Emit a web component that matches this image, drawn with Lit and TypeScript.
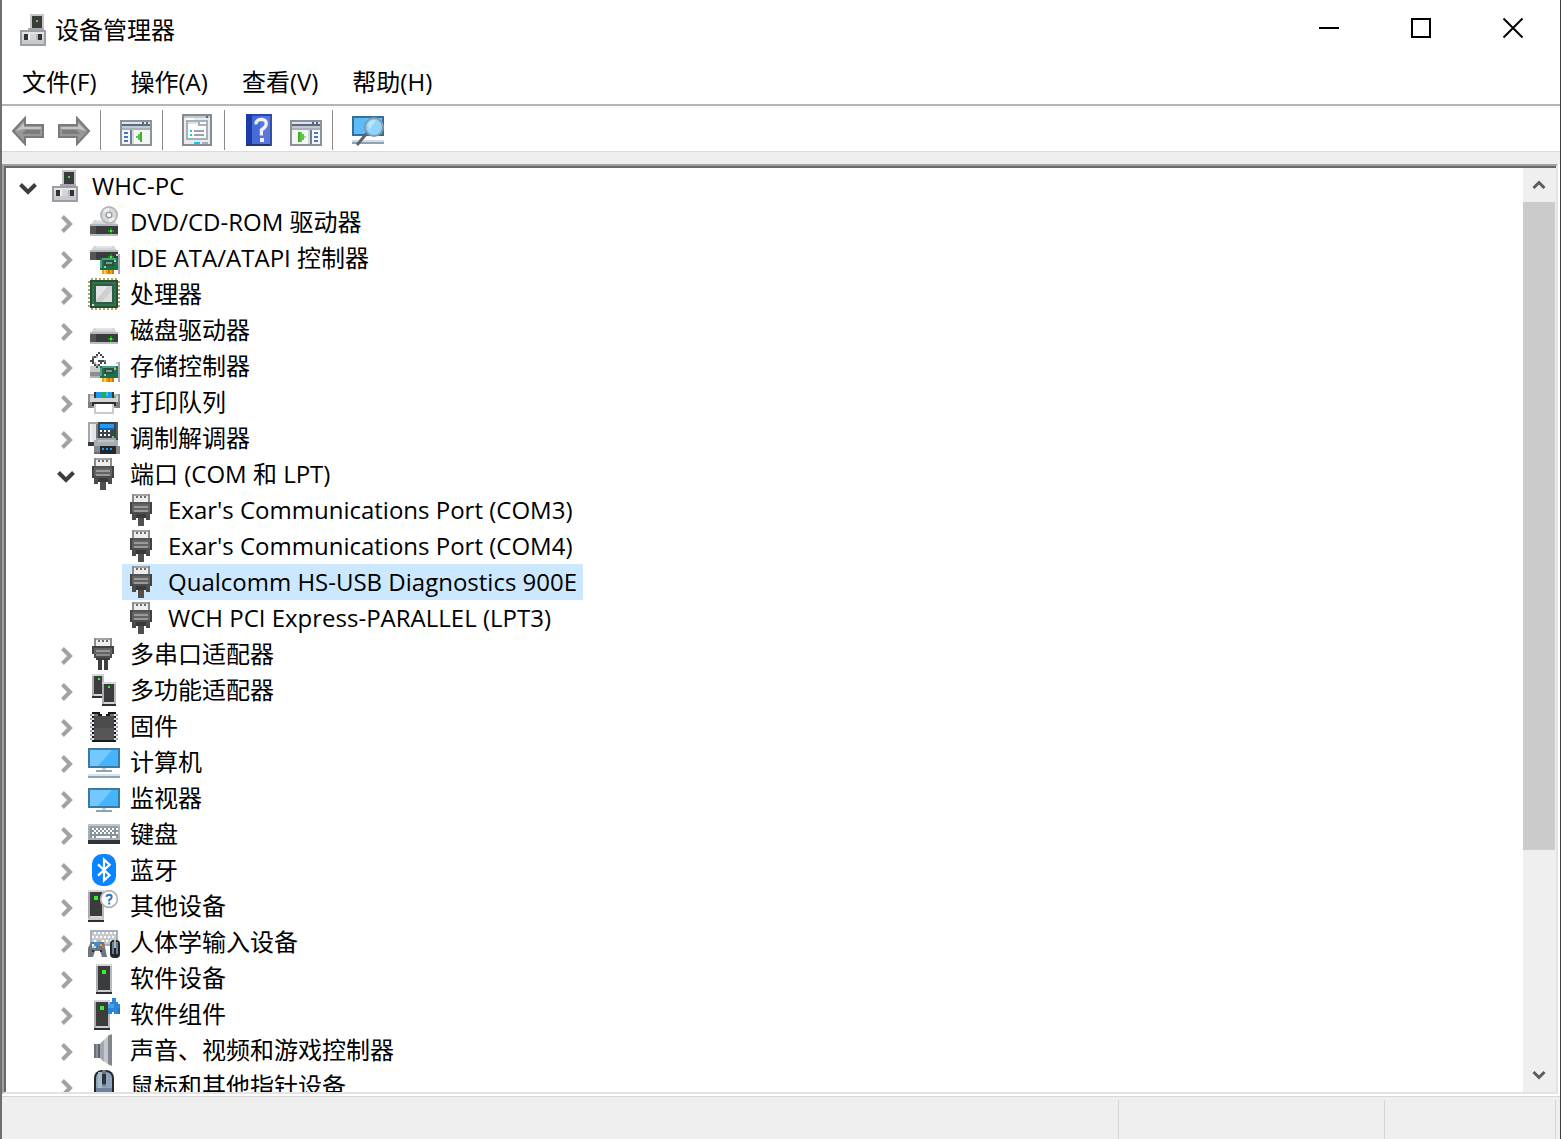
import { LitElement, html, svg, css, nothing } from "lit";
import type { SVGTemplateResult } from "lit";
import { customElement, property, state } from "lit/decorators.js";
import { classMap } from "lit/directives/class-map.js";

/** Draws "x y w h colour" cells, separated by semicolons, on the 16-unit icon grid. */
const cells = (spec: string): SVGTemplateResult[] =>
  spec
    .split(";")
    .map((part) => part.trim().split(" "))
    .filter((part) => part.length === 5)
    .map(([x, y, w, h, fill]) => svg`<rect x=${x} y=${y} width=${w} height=${h} fill=${fill}></rect>`);

const drive = (y: number) => svg`
  <path d="M3 ${y}h10l2 3H1z" fill="#d3d5d8"/>
  <path d="M4 ${y}h8v1H4z" fill="#e3e4e6"/>
  ${cells(`1 ${y + 2} 14 1 #b4b7bb;1 ${y + 3} 14 4 #3c3c3c;1 ${y + 3} 3 4 #555555;10 ${y + 5} 3 1 #178a17;11 ${y + 4} 1 3 #178a17;11 ${y + 5} 1 1 #3df53d;1 ${y + 7} 14 1 #b9bcc0`)}`;

const card = cells(
  "6 8 9 6 #1d6e49;7 8 7 1 #49a37b;6 9 1 4 #49a37b;8 9 5 3 #2f4f43;9 10 3 1 #6fa48c;8 12 1 1 #8ed0af;13 9 1 1 #8ed0af;" +
    "7 14 6 2 #f0a30a;8 14 1 2 #ffc94d;10 14 1 2 #c97e00;12 14 1 2 #c97e00;15 6 1 10 #a5a8ab;14 6 1 1 #c9ccd0",
);

const tower = (x: number, y: number, w: number, h: number) =>
  cells(
    `${x} ${y} ${w} ${h - 1} #d4d7da;${x} ${y + 1} 1 ${h - 2} #a9adb2;${x + 1} ${y + 1} ${w - 2} ${h - 3} #3c3c3c;` +
      `${x + w - 1} ${y + 1} 1 ${h - 2} #b7bbbf;${x} ${y + h - 1} ${w} 1 #2b2e33`,
  );

const plugHead = cells(
  "3 0 9 4 #8c8c8c;4 1 7 3 #ededed;5 1 1 1 #6d6d6d;7 1 1 1 #6d6d6d;9 1 1 1 #6d6d6d;4 0 7 1 #a2a2a2",
);

const miniWindow = (flip: boolean) =>
  cells(
    "0 3 16 13 #8b9299;1 4 14 1 #dfe5ea;1 5 14 1 #5a6a86;1 6 14 1 #c3c9cf;11 4 1 1 #52688c;13 4 1 1 #52688c;1 7 14 8 #f4f5f5;1 7 14 1 #a9b0b6;" +
      (flip
        ? "10 8 1 7 #6e7f94;9 8 1 7 #d5d9dc;12 9 2 1 #4a78b8;12 11 2 1 #4a78b8;12 13 2 1 #4a78b8;4 9 1 5 #3fae29;5 9 1 5 #5cc544;6 10 1 3 #5cc544;7 11 1 1 #9bdc8c"
        : "5 8 1 7 #6e7f94;6 8 1 7 #d5d9dc;2 9 2 1 #4a78b8;2 11 2 1 #4a78b8;2 13 2 1 #4a78b8;10 9 1 5 #3fae29;9 10 1 3 #5cc544;8 11 1 1 #5cc544"),
  );

const arrowBody = svg`
  <path d="M0.5 8.5L6.5 2V5.5H15.5V11.5H6.5V15z" fill="#989898" stroke="#7a7a7a" stroke-width="1"/>
  <path d="M2 8.5L6 4.5V6.5H14.5V7.5H6z" fill="#c4c4c4"/>
  <path d="M7 8h7v2H5z" fill="#7b7b7b"/>`;

const screen = (y: number) => svg`
  ${cells(`0 ${y} 16 10 #3b79a3;1 ${y + 1} 14 8 #45b4fb`)}
  <path d="M1 ${y + 1}h11L5 ${y + 9}H1z" fill="#72c8ff"/>
  ${cells(`7 ${y + 10} 2 1 #c9d3de;4 ${y + 11} 8 1 #8fa1b5`)}`;

const keyRow = (x: number, y: number, n: number) =>
  Array.from({ length: n }, (_, i) => svg`<rect x=${x + i * 2} y=${y} width="1" height="1" fill="#ffffff"></rect>`);

const icons: Record<string, unknown> = {
  manager: svg`${cells(
    "6 0 7 8 #c4c7ca;7 1 5 6 #3b3b3b;9 3 1 1 #39e639;5 7 8 1 #a5a8ab;1 8 13 8 #9b9ea2;2 9 11 6 #d4d5d9;2 9 11 1 #e4e5e8;2 13 11 2 #c8c9ce;3 10 2 3 #333333;10 10 2 3 #333333;5 10 1 3 #f2f2f4;9 10 1 3 #b5b7bc",
  )}`,
  dvd: svg`${drive(7)}
    <circle cx="10.5" cy="4.5" r="4.5" fill="#b3b6b8"/><circle cx="10.5" cy="4.5" r="3.6" fill="#d7dadb"/>
    <path d="M10.5 4.5L7.5 2.5A4 4 0 0 1 10.5 .9z" fill="#eef0f0"/><path d="M10.5 4.5l3.2 1.6a4 4 0 0 1-3.2 2z" fill="#eef0f0"/>
    <circle cx="10.5" cy="4.5" r="1.8" fill="#9da1a3"/><circle cx="10.5" cy="4.5" r="1" fill="#ffffff"/>`,
  ide: svg`${drive(2)}${cells("1 9 5 1 #ffffff")}${card}`,
  cpu: svg`${[1, 3, 5, 7, 9, 11, 13].map((p) => cells(`${p + 0.5} 0 1 1 #c1a15a;${p + 0.5} 15 1 1 #c1a15a;0 ${p + 0.5} 1 1 #c1a15a;15 ${p + 0.5} 1 1 #c1a15a`))}
    ${cells("1 1 14 14 #1f5138;2 2 12 12 #35704f;2 13 1 1 #d8e8d8;3 3 10 10 #2b5f43;4 4 8 8 #cfcfcf")}
    <path d="M4 4h6L4 11z" fill="#e4e4e4"/><path d="M12 6v6H7z" fill="#dedede"/>`,
  disk: drive(7),
  storage: svg`${cells("1 8 5 3 #c9cccf;1 11 5 2 #8b8f93;1 13 5 1 #b0b3b6")}
    ${cells(
      "5 1 1 1 #484848;4 2 1 1 #484848;6 2 1 1 #484848;3 3 1 1 #484848;7 3 1 1 #484848;2 4 1 1 #484848;1 5 2 1 #484848;2 6 1 1 #484848;3 7 1 1 #484848;4 8 1 1 #484848;5 7 1 1 #484848;6 6 1 1 #484848;7 5 1 1 #484848;8 6 1 1 #484848;5 5 2 1 #484848;2 3 1 1 #8a8a8a;4 3 1 1 #b5b5b5;3 6 1 1 #b5b5b5;4 7 1 1 #b5b5b5;8 5 1 1 #8a8a8a",
    )}
    ${card}`,
  printer: cells(
    "0 4 16 7 #8d9196;1 4 14 1 #b5b9bd;1 5 14 3 #d3d6d9;3 3 10 3 #33383c;4 3 8 3 #2196f3;7 3 2 3 #20b24a;9 3 1 2 #39c7c0;13 5 1 1 #2be02b;2 8 12 2 #2f2f2f;0 8 2 3 #7a7e83;14 8 2 3 #7a7e83;3 9 10 4 #ffffff;3 9 1 4 #c8cbce;12 9 1 4 #c8cbce;3 13 10 1 #c8cbce",
  ),
  modem: svg`${cells("0 0 15 9 #3d4349;0 0 5 11 #a4a8ac;1 1 3 9 #e3e5e7;1 1 1 9 #f2f3f4;4 1 1 9 #767b80;0 10 4 2 #343a3f;6 1 7 2 #1e9bff;6 3 7 1 #1366aa;14 0 1 8 #565c62")}
    ${keyRow(6, 4, 3)}${keyRow(6, 6, 3)}
    ${cells("12 7 1 1 #33ee33;4 8 10 1 #a0a3a7;3 9 12 3 #a9acb0;3 12 13 4 #85888c;5 9 8 1 #c1c4c7;6 12 8 4 #22272b;7 13 1 1 #1e9bff;9 13 1 1 #1e9bff;11 13 1 1 #1e9bff;3 15 3 1 #6a6d70")}`,
  port: svg`${plugHead}${cells("2 4 11 6 #424242;3 5 9 5 #636363;3 4 9 1 #555555;4 6 7 1 #9a9a9a;4 8 7 1 #9a9a9a;3 9 9 2 #4d4d4d;3 11 2 2 #4a4a4a;10 11 2 2 #4a4a4a;5 10 5 2 #3a3a3a;6 12 3 4 #505050")}`,
  multiport: svg`${plugHead}${cells("2 4 11 4 #424242;3 5 9 3 #636363;4 6 7 1 #9a9a9a;3 8 9 2 #4d4d4d;4 8 7 1 #8c8c8c;4 10 7 1 #3a3a3a;5 11 2 5 #3f3f3f;8 11 2 5 #3f3f3f")}`,
  multifunction: svg`${tower(2, 0, 6, 12)}${cells("5 2 1 1 #3df53d")}${tower(7, 4, 7, 12)}${cells("10 6 1 1 #3df53d")}`,
  firmware: svg`${[2, 4, 6, 8, 10, 12, 14].map((p) => cells(`1 ${p} 2 1 #9aa7bb;13 ${p} 2 1 #9aa7bb`))}
    ${cells("2 1 12 15 #181818;3 3 10 12 #4b4b4b;3 9 10 6 #565656;6 1 4 1 #ffffff;7 2 2 1 #ffffff;6 2 1 1 #181818;9 2 1 1 #181818;3 2 2 1 #7a7a7a;11 2 2 1 #7a7a7a")}
    ${[2, 4, 6, 8, 10, 12, 14].map((p) => cells(`2 ${p} 1 1 #dfe3e8;13 ${p} 1 1 #dfe3e8`))}`,
  computer: svg`${screen(1)}${cells("0 14 16 1 #dbe1e8;0 15 16 1 #8fa1b5")}`,
  monitor: screen(3),
  keyboard: svg`${cells("0 3 16 8 #a8afb6;1 4 14 6 #8a9299;1 4 14 1 #99a1a8;0 11 16 2 #2e343a;0 3 16 1 #c2c7cb;4 9 7 1 #ffffff")}
    ${keyRow(2, 5, 7)}${keyRow(3, 6, 5)}${keyRow(2, 7, 7)}${cells("2 9 1 1 #ffffff;12 9 2 1 #ffffff")}`,
  bluetooth: svg`<rect x="2" y="0" width="12" height="16" rx="5" fill="#0a84ff"/>
    <path d="M5 5.2L10.8 10.6L8 13.2V2.8L10.8 5.4L5 10.8" fill="none" stroke="#ffffff" stroke-width="1.1"/>`,
  other: svg`${tower(0, 0, 8, 15)}${cells("3 3 2 2 #2bf52b;0 14 8 1 #c9ccd0;0 15 8 1 #2b2e33")}
    <circle cx="10.5" cy="4.5" r="4.2" fill="#ffffff" stroke="#b0b0b0" stroke-width=".8"/>
    <path d="M9.2 3.4Q9.4 2.4 10.6 2.4Q12 2.5 11.8 3.7Q11.6 4.5 10.6 5V5.8M10.1 6.8h1" fill="none" stroke="#2d78b8" stroke-width="1"/>`,
  hid: svg`${cells("1 2 14 8 #a9b0b7;2 3 12 6 #c5cad0")}${keyRow(3, 3, 6)}${keyRow(2, 5, 6)}${keyRow(3, 7, 6)}
    <path d="M1.5 8h6.5l1.5 7.5H7L6 12.5H3.5L2.5 15.5H0V11z" fill="#6b7681"/>
    ${cells("3 8 3 2 #2196f3;2 9 1 1 #ffffff;6 9 1 1 #ff9d2e;7 10 1 1 #ff5a36;5 7 1 1 #ff9d2e;2 10 2 1 #cbd2d8;6 12 1 1 #27303a;2 12 1 1 #27303a")}
    <rect x="11" y="7" width="5" height="9" rx="2" fill="#20262c"/>${cells("12 8 1 6 #6f7c89;14 8 1 6 #6f7c89;13 7 1 4 #aeb7c0")}`,
  software: svg`${tower(4, 1, 8, 15)}${cells("7 4 2 2 #2bf52b;5 14 6 1 #c9ccd0")}`,
  component: svg`${tower(3, 1, 8, 15)}${cells("6 4 2 2 #2bf52b;4 14 6 1 #c9ccd0;10 2 6 6 #2b86d3;12 0 2 3 #2b86d3;12 7 1 1 #ffffff;15 5 1 3 #1f75bd;10 3 3 2 #4aa0e6;10 2 1 1 #b7bbbf;15 2 1 1 #ffffff")}`,
  sound: svg`${cells("3 5 3 7 #8a929a;3 5 1 7 #68727c;5 5 1 7 #59636d")}
    <path d="M6 5L11 0V16L6 12z" fill="#c3c7cb"/><path d="M6 5l2-2v11l-2-2z" fill="#a1a7ad"/><path d="M10 1l2-1v16l-2-1z" fill="#7f868d"/>`,
  mouse: svg`<rect x="3" y="0" width="10" height="20" rx="4" fill="#23282d"/><rect x="4" y="1" width="8" height="18" rx="3" fill="#8fa3bb"/>
    ${cells("5 1 2 8 #a9bacd;7 0 2 8 #6a7889;7 2 2 5 #2c3238;4 9 8 8 #71839a")}`,
  back: arrowBody,
  forward: svg`<g transform="matrix(-1 0 0 1 16 0)">${arrowBody}</g>`,
  tree: miniWindow(false),
  action: miniWindow(true),
  properties: cells(
    "0 0 15 16 #868c92;1 1 13 14 #e9ecee;1 1 13 1 #c3c9ce;12 1 1 1 #4d678c;2 3 11 10 #a8b0b7;3 4 9 8 #ffffff;3 4 5 1 #dfe3e6;8 4 1 1 #a8b0b7;8 5 4 1 #a8b0b7;4 8 1 1 #12c6f7;6 8 5 1 #9aa3ab;4 10 1 1 #12c6f7;6 10 5 1 #9aa3ab;6 14 3 1 #12c6f7;10 14 3 1 #a8b0b7;2 2 4 1 #ffffff",
  ),
  help: svg`${cells("1 0 13 16 #2648b5;1 0 3 16 #1c3ba6;4 1 9 14 #5876dd;4 1 4 14 #456bd9;1 15 13 1 #26346f;13 1 1 15 #34509f")}
    <path d="M6 5.2Q5.9 2.9 8.6 2.7Q11.4 2.8 11.1 5.2Q10.8 6.9 8.7 8V10.8" fill="none" stroke="#f2f2f2" stroke-width="1.6"/>
    ${cells("8 12 2 2 #f2f2f2")}`,
  scan: svg`${cells("0 1 16 10 #336f9b;1 2 14 8 #6cc5fb;1 2 6 8 #5dbcf8;4 13 12 1 #d3dae1;0 14 16 1 #8fa1b5;0 13 3 1 #d3dae1")}
    <path d="M7.5 9.5L2.5 15.5" stroke="#5d6469" stroke-width="1.5"/>
    <circle cx="11" cy="6.5" r="4.5" fill="#8fd4fb" stroke="#8299a9" stroke-width="1"/>
    <path d="M8 5a3.5 3.5 0 0 1 4-1.8L8.6 8z" fill="#b9e4fc"/>`,
};

@customElement("device-icon")
export class DeviceIcon extends LitElement {
  @property() name = "";

  static styles = css`
    :host {
      display: block;
      width: 32px;
      height: 32px;
      flex: none;
    }
    .glyph {
      display: block;
      width: 100%;
      height: 100%;
    }
  `;

  render() {
    return html`<svg class="glyph" viewBox="0 0 16 16" aria-hidden="true">${icons[this.name] ?? nothing}</svg>`;
  }
}

interface Device {
  name: string;
  icon: string;
  children?: Device[];
}

const computer: Device = {
  name: "WHC-PC",
  icon: "manager",
  children: [
    { name: "DVD/CD-ROM 驱动器", icon: "dvd", children: [] },
    { name: "IDE ATA/ATAPI 控制器", icon: "ide", children: [] },
    { name: "处理器", icon: "cpu", children: [] },
    { name: "磁盘驱动器", icon: "disk", children: [] },
    { name: "存储控制器", icon: "storage", children: [] },
    { name: "打印队列", icon: "printer", children: [] },
    { name: "调制解调器", icon: "modem", children: [] },
    {
      name: "端口 (COM 和 LPT)",
      icon: "port",
      children: [
        { name: "Exar's Communications Port (COM3)", icon: "port" },
        { name: "Exar's Communications Port (COM4)", icon: "port" },
        { name: "Qualcomm HS-USB Diagnostics 900E", icon: "port" },
        { name: "WCH PCI Express-PARALLEL (LPT3)", icon: "port" },
      ],
    },
    { name: "多串口适配器", icon: "multiport", children: [] },
    { name: "多功能适配器", icon: "multifunction", children: [] },
    { name: "固件", icon: "firmware", children: [] },
    { name: "计算机", icon: "computer", children: [] },
    { name: "监视器", icon: "monitor", children: [] },
    { name: "键盘", icon: "keyboard", children: [] },
    { name: "蓝牙", icon: "bluetooth", children: [] },
    { name: "其他设备", icon: "other", children: [] },
    { name: "人体学输入设备", icon: "hid", children: [] },
    { name: "软件设备", icon: "software", children: [] },
    { name: "软件组件", icon: "component", children: [] },
    { name: "声音、视频和游戏控制器", icon: "sound", children: [] },
    { name: "鼠标和其他指针设备", icon: "mouse", children: [] },
  ],
};

const menus = ["文件(F)", "操作(A)", "查看(V)", "帮助(H)"];

const tools = [
  [
    { icon: "back", label: "后退" },
    { icon: "forward", label: "前进" },
  ],
  [{ icon: "tree", label: "显示/隐藏控制台树" }],
  [{ icon: "properties", label: "属性" }],
  [
    { icon: "help", label: "帮助" },
    { icon: "action", label: "显示/隐藏操作窗格" },
  ],
  [{ icon: "scan", label: "扫描检测硬件改动" }],
];

@customElement("app-root")
export class AppRoot extends LitElement {
  @state() private open = new Set<string>(["WHC-PC", "端口 (COM 和 LPT)"]);
  @state() private selected = "Qualcomm HS-USB Diagnostics 900E";

  static styles = css`
    :host {
      display: block;
      font: 24px/36px "Open Sans", "Noto Sans CJK SC", sans-serif;
      color: #000;
    }
    * {
      box-sizing: border-box;
    }
    button {
      margin: 0;
      padding: 0;
      border: 0;
      background: none;
      font: inherit;
      color: inherit;
    }
    .window {
      display: flex;
      flex-direction: column;
      height: 100vh;
      background: #fff;
      border-left: 2px solid #6f6f70;
      border-right: 1px solid #3a3e42;
      overflow: hidden;
    }
    .titlebar {
      display: flex;
      align-items: flex-start;
      height: 60px;
      flex: none;
      padding-right: 1px;
    }
    .caption {
      display: flex;
      align-items: center;
      gap: 5px;
      flex: 1;
      height: 60px;
      padding-left: 16px;
    }
    .title {
      margin: 0;
      font: inherit;
    }
    .control {
      display: grid;
      place-items: center;
      width: 92px;
      height: 56px;
    }
    .control-glyph {
      width: 22px;
      height: 22px;
      fill: none;
      stroke: #000;
      stroke-width: 2;
    }
    .menubar {
      display: flex;
      align-items: center;
      gap: 34px;
      height: 46px;
      flex: none;
      padding-left: 20px;
      border-bottom: 2px solid #b4b4b4;
    }
    .toolbar {
      display: flex;
      align-items: center;
      height: 46px;
      flex: none;
      padding-left: 10px;
      border-top: 2px solid #f8fafd;
      border-bottom: 1px solid #dadada;
    }
    .group {
      display: flex;
      gap: 14px;
    }
    .divider {
      width: 1px;
      height: 40px;
      margin: 0 19px 0 10px;
      background: #8a8a8a;
    }
    .band {
      height: 12px;
      flex: none;
      background: #efefef;
    }
    .sunken {
      display: flex;
      flex: 1;
      min-height: 0;
      margin: 0 2px 2px 0;
      border: 2px solid;
      border-color: #a0a0a0 #e3e3e3 #e3e3e3 #a0a0a0;
    }
    .pane {
      display: flex;
      flex: 1;
      min-width: 0;
      border-top: 2px solid #696969;
      border-left: 2px solid #696969;
    }
    .tree {
      flex: 1;
      min-width: 0;
      margin: 0;
      padding: 0 0 0 6px;
      list-style: none;
      overflow: hidden;
    }
    .branch {
      margin: 0;
      padding: 0 0 0 38px;
      list-style: none;
    }
    .row {
      display: flex;
      align-items: center;
      height: 36px;
      white-space: nowrap;
    }
    .twisty {
      display: grid;
      place-items: center;
      width: 32px;
      height: 36px;
      margin-right: 2px;
    }
    .twisty-glyph {
      width: 20px;
      height: 20px;
      fill: none;
      stroke: #a2a2a2;
      stroke-width: 4;
      overflow: visible;
    }
    .expanded {
      stroke: #3d3d3d;
    }
    .entry {
      display: flex;
      align-items: center;
      gap: 10px;
      height: 36px;
      padding: 0 6px 0 4px;
    }
    .leaf {
      margin-left: 34px;
    }
    .chosen {
      background: #cce8ff;
    }
    .scrollbar {
      display: flex;
      flex-direction: column;
      width: 33px;
      padding-right: 1px;
      background: #efefef;
    }
    .step {
      display: grid;
      place-items: center;
      height: 34px;
      flex: none;
    }
    .step-glyph {
      width: 14px;
      height: 14px;
      fill: none;
      stroke: #5c5c5c;
      stroke-width: 3;
    }
    .track {
      display: flex;
      flex-direction: column;
      flex: 1;
    }
    .thumb {
      flex: 81;
      background: #cbcbcb;
    }
    .rest {
      flex: 26;
    }
    .statusbar {
      display: flex;
      height: 43px;
      flex: none;
      padding: 3px 4px 0 0;
      border-top: 1px solid #d7d7d7;
      background: #efefef;
    }
    .cell {
      border-right: 1px solid #d7d7d7;
    }
    .cell-main {
      flex: 1118;
    }
    .cell-wide {
      flex: 266;
    }
    .cell-narrow {
      flex: 170;
    }
  `;

  private toggle(name: string) {
    const next = new Set(this.open);
    if (!next.delete(name)) next.add(name);
    this.open = next;
  }

  private scrollTree(rows: number) {
    this.renderRoot.querySelector(".tree")?.scrollBy(0, rows * 36);
  }

  private renderDevice(device: Device): unknown {
    const expanded = this.open.has(device.name);
    const chosen = this.selected === device.name;
    return html`
      <li role="treeitem" aria-selected=${chosen} aria-expanded=${device.children ? String(expanded) : nothing}>
        <div class="row">
          ${device.children
            ? html`<button class="twisty" aria-label=${device.name} @click=${() => this.toggle(device.name)}>
                <svg class=${classMap({ "twisty-glyph": true, expanded })} viewBox="0 0 20 20">
                  ${expanded ? svg`<path d="M2.5 8.5L10 16L17.5 8.5"/>` : svg`<path d="M6.5 4.5L14 12L6.5 19.5"/>`}
                </svg>
              </button>`
            : nothing}
          <button
            class=${classMap({ entry: true, leaf: !device.children, chosen })}
            @click=${() => (this.selected = device.name)}
          >
            <device-icon name=${device.icon}></device-icon>
            <span>${device.name}</span>
          </button>
        </div>
        ${expanded && device.children?.length
          ? html`<ul class="branch" role="group">
              ${device.children.map((child) => this.renderDevice(child))}
            </ul>`
          : nothing}
      </li>
    `;
  }

  render() {
    return html`
      <div class="window">
        <header class="titlebar">
          <div class="caption">
            <device-icon name="manager"></device-icon>
            <h1 class="title">设备管理器</h1>
          </div>
          <button class="control" aria-label="最小化">
            <svg class="control-glyph" viewBox="0 0 22 22"><path d="M1 11H21"/></svg>
          </button>
          <button class="control" aria-label="最大化">
            <svg class="control-glyph" viewBox="0 0 22 22"><path d="M2 2H20V20H2z"/></svg>
          </button>
          <button class="control" aria-label="关闭">
            <svg class="control-glyph" viewBox="0 0 22 22"><path d="M1.5 1.5L20.5 20.5M20.5 1.5L1.5 20.5"/></svg>
          </button>
        </header>
        <nav class="menubar">${menus.map((label) => html`<button>${label}</button>`)}</nav>
        <div class="toolbar" role="toolbar">
          ${tools.map(
            (group, i) => html`
              ${i ? html`<span class="divider"></span>` : nothing}
              <div class="group">
                ${group.map(
                  (tool) => html`<button aria-label=${tool.label}><device-icon name=${tool.icon}></device-icon></button>`,
                )}
              </div>
            `,
          )}
        </div>
        <div class="band"></div>
        <main class="sunken">
          <div class="pane">
            <ul class="tree" role="tree">
              ${this.renderDevice(computer)}
            </ul>
            <div class="scrollbar">
              <button class="step" aria-label="向上滚动" @click=${() => this.scrollTree(-1)}>
                <svg class="step-glyph" viewBox="0 0 14 14"><path d="M1.5 10L7 4.5L12.5 10"/></svg>
              </button>
              <div class="track">
                <div class="thumb"></div>
                <div class="rest"></div>
              </div>
              <button class="step" aria-label="向下滚动" @click=${() => this.scrollTree(1)}>
                <svg class="step-glyph" viewBox="0 0 14 14"><path d="M1.5 4L7 9.5L12.5 4"/></svg>
              </button>
            </div>
          </div>
        </main>
        <footer class="statusbar">
          <div class="cell cell-main"></div>
          <div class="cell cell-wide"></div>
          <div class="cell cell-narrow"></div>
        </footer>
      </div>
    `;
  }
}
